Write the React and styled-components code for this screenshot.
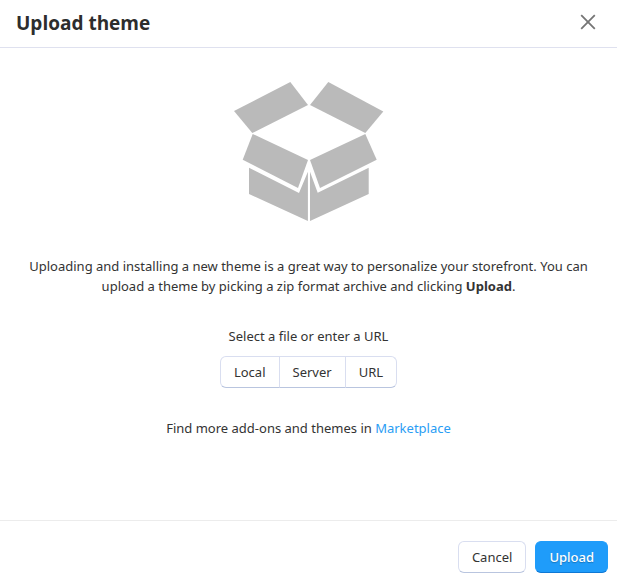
import styled, { createGlobalStyle } from "styled-components";

const GlobalStyle = createGlobalStyle`
  * {
    box-sizing: border-box;
  }

  body {
    margin: 0;
    background-color: #fff;
    color: #333;
    font-family: "Noto Sans", "Open Sans", sans-serif;
    font-size: 13px;
    line-height: 20px;
  }
`;

const Dialog = styled.div`
  min-height: 100vh;
  display: flex;
  flex-direction: column;
`;

const Header = styled.header`
  display: flex;
  justify-content: space-between;
  align-items: flex-start;
  padding: 8px 20px 9px 16px;
  border-bottom: 1px solid #dfe1ef;
`;

const Title = styled.h1`
  margin: 0;
  font-family: "Open Sans", sans-serif;
  font-size: 19px;
  line-height: 30px;
  font-weight: 700;
  color: #2d2d2d;
`;

const CloseButton = styled.button`
  display: flex;
  padding: 5px 0;
  border: none;
  background: none;
  color: #757575;
  cursor: pointer;
`;

const Content = styled.main`
  flex: 1;
  display: flex;
  flex-direction: column;
  align-items: center;
  padding: 34px 20px;
  text-align: center;
`;

const Text = styled.p`
  margin: ${(props) => props.$top}px 0 0;
`;

const Group = styled.div`
  display: flex;
  margin-top: 10px;
`;

const Button = styled.button`
  height: 32px;
  padding: 0 13px;
  border: 1px solid #d9def0;
  border-bottom-color: #b9c5df;
  border-radius: 6px;
  background-color: #fff;
  color: #333;
  font: inherit;
  cursor: pointer;
`;

const GroupButton = styled(Button)`
  border-radius: 0;

  &:not(:first-child) {
    margin-left: -1px;
  }

  &:first-child {
    border-radius: 6px 0 0 6px;
  }

  &:last-child {
    border-radius: 0 6px 6px 0;
  }
`;

const PrimaryButton = styled(Button)`
  border-color: #1f9cfa;
  border-bottom-color: #0f78d4;
  background-color: #1f9cfa;
  color: #fff;
  font-weight: 500;
  text-shadow: 0 1px 1px rgba(0, 0, 0, 0.25);
`;

const Link = styled.a`
  color: #2a9df4;
  text-decoration: none;
`;

const Footer = styled.footer`
  display: flex;
  justify-content: flex-end;
  gap: 9px;
  padding: 20px 9px 15px;
  border-top: 1px solid #ececec;
`;

function CloseIcon() {
  return (
    <svg width="18" height="18" viewBox="0 0 18 18" aria-hidden="true">
      <path
        d="M2.2 2.2L15.8 15.8M15.8 2.2L2.2 15.8"
        stroke="currentColor"
        strokeWidth="1.8"
      />
    </svg>
  );
}

function BoxIcon() {
  return (
    <svg
      width="150"
      height="140"
      viewBox="0 0 150 140"
      fill="#bababa"
      aria-hidden="true"
    >
      {/* Back flaps */}
      <path d="M56.3 0L74 23L18.3 51L0 29Z" />
      <path d="M94.3 0L149.3 29.5L131.3 51L76 23Z" />
      {/* Front flaps */}
      <path d="M18.7 52L74 78L64 106L8.7 77.7Z" />
      <path d="M131.3 52L142.7 77.7L86 106L76 78Z" />
      {/* Sides */}
      <path d="M15 85.7L65 111L73.9 89.7V139L15 112Z" />
      <path d="M134.7 85.7V112L76 139V89.7L83.7 110.7Z" />
    </svg>
  );
}

const sources = ["Local", "Server", "URL"];

function App() {
  return (
    <Dialog role="dialog" aria-labelledby="dialog-title">
      <GlobalStyle />
      <Header>
        <Title id="dialog-title">Upload theme</Title>
        <CloseButton type="button" aria-label="Close">
          <CloseIcon />
        </CloseButton>
      </Header>

      <Content>
        <BoxIcon />
        <Text $top={34}>
          Uploading and installing a new theme is a great way to personalize
          your storefront. You can upload a theme by picking a zip format
          archive and clicking <b>Upload</b>.
        </Text>

        <Text $top={30} id="source-label">
          Select a file or enter a URL
        </Text>
        <Group role="group" aria-labelledby="source-label">
          {sources.map((source) => (
            <GroupButton type="button" key={source}>
              {source}
            </GroupButton>
          ))}
        </Group>

        <Text $top={30}>
          Find more add-ons and themes in <Link href="#">Marketplace</Link>
        </Text>
      </Content>

      <Footer>
        <Button type="button">Cancel</Button>
        <PrimaryButton type="button">Upload</PrimaryButton>
      </Footer>
    </Dialog>
  );
}

export default App;
